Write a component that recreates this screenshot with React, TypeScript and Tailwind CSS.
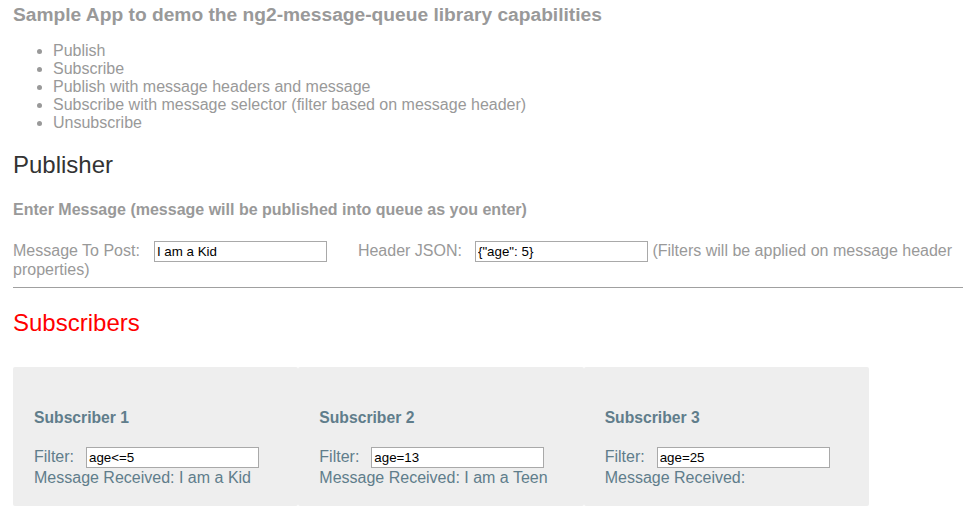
import React, { useState } from 'react'

const subscribers = [
  { name: 'Subscriber 1', filter: 'age<=5', received: 'I am a Kid' },
  { name: 'Subscriber 2', filter: 'age=13', received: 'I am a Teen' },
  { name: 'Subscriber 3', filter: 'age=25', received: '' },
]

const inputCls =
  'inline-block align-middle w-[173px] h-[21px] px-[2px] border border-[#a9a9a9] bg-white text-black text-[13.33px] leading-[17px] outline-none'

export default function App() {
  const [message, setMessage] = useState('I am a Kid')
  const [header, setHeader] = useState('{"age": 5}')

  return (
    <div className="min-h-[531px] bg-white pl-[13px] pr-[8px] pt-[4px] font-['Liberation_Sans',Arial,sans-serif] text-[#999]">
      <h4 className="text-[19.2px] leading-[22px] font-bold">Sample App to demo the ng2-message-queue library capabilities</h4>

      <ul className="mt-[16px] list-disc pl-[40px] text-[16px] leading-[18px]">
        <li>Publish</li>
        <li>Subscribe</li>
        <li>Publish with message headers and message</li>
        <li>Subscribe with message selector (filter based on message header)</li>
        <li>Unsubscribe</li>
      </ul>

      {/* Publisher */}
      <h2 className="mt-[19px] text-[24px] leading-[28px] text-[#333]">Publisher</h2>
      <h5 className="mt-[22px] text-[16px] leading-[18px] font-bold">Enter Message (message will be published into queue as you enter)</h5>

      <div className="mt-[23px] text-[16px] leading-[18px]">
        <span>Message To Post:</span>
        <input value={message} onChange={(e) => setMessage(e.target.value)} className={`${inputCls} ml-[14px] -my-[1px]`} />
        <span className="ml-[31px]">Header JSON:</span>
        <input value={header} onChange={(e) => setHeader(e.target.value)} className={`${inputCls} ml-[13px] -my-[1px]`} />
        <span> (Filters will be applied on message header properties)</span>
      </div>

      <hr className="mt-[8px] border-0 border-t border-[#a0a0a0]" />

      {/* Subscribers */}
      <h2 className="mt-[21px] text-[24px] leading-[28px] text-[#ff0000]">Subscribers</h2>

      <div className="mt-[30px] grid w-[856px] grid-cols-3 text-[#607d8b]">
        {subscribers.map((s) => (
          <div key={s.name} className="rounded-[2px] bg-[#eeeeee] px-[21px] pt-[42px] pb-[19px]">
            <h5 className="text-[15.7px] leading-[18px] font-bold">{s.name}</h5>
            <div className="mt-[19px] flex h-[22px] items-center text-[16px]">
              <span>Filter:</span>
              <input defaultValue={s.filter} className={`${inputCls} ml-[12px]`} />
            </div>
            <div className="mt-[1px] text-[16px] leading-[18px]">Message Received: {s.received}</div>
          </div>
        ))}
      </div>
    </div>
  )
}
